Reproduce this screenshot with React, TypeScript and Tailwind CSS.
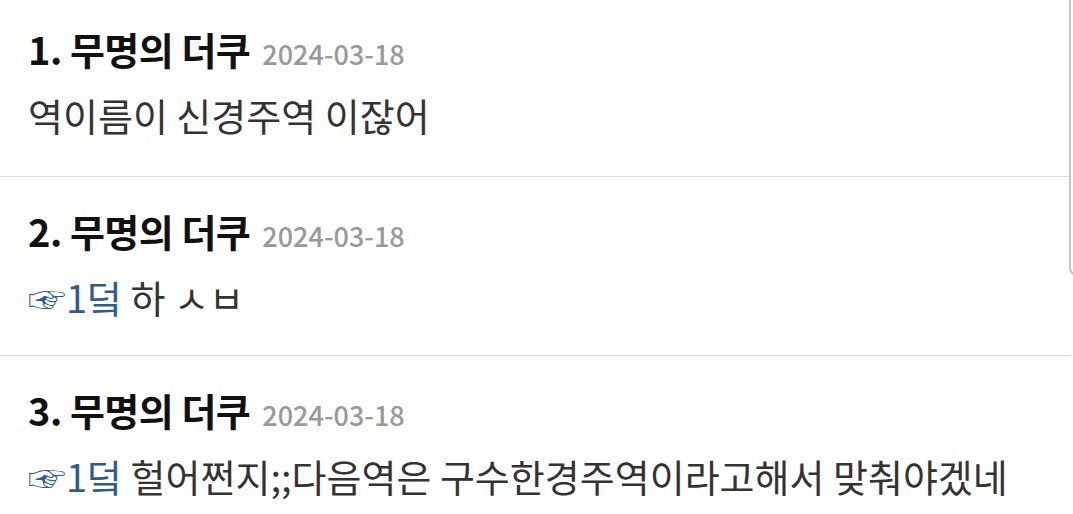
import React from 'react';

interface Comment {
  no: number;
  author: string;
  date: string;
  reply?: string;
  text: string;
}

const COMMENTS: Comment[] = [
  { no: 1, author: '무명의 더쿠', date: '2024-03-18', text: '역이름이 신경주역 이잖어' },
  { no: 2, author: '무명의 더쿠', date: '2024-03-18', reply: '1덬', text: '하 ㅅㅂ' },
  { no: 3, author: '무명의 더쿠', date: '2024-03-18', reply: '1덬', text: '헐어쩐지;;다음역은 구수한경주역이라고해서 맞춰야겠네' },
];

export default function App() {
  return (
    <div
      className="relative w-[1073px] h-[514px] overflow-hidden bg-white"
      style={{ fontFamily: '"Noto Sans CJK KR", "Noto Sans", sans-serif' }}
    >
      <div className="-mt-[5px]">
        {COMMENTS.map((c, i) => (
          <div
            key={c.no}
            className={`border-b border-[#dcdcdc] pl-[28px] pt-[30px] mr-[2px] ${i === 0 ? 'pb-[37px]' : 'pb-[34px]'}`}
          >
            <div className="flex items-baseline h-[48px] leading-[48px] whitespace-nowrap">
              <span className="text-[38px] font-bold text-[#111] tracking-[-0.5px]">
                {c.no}. {c.author}
              </span>
              <span className="ml-[12px] text-[27px] font-medium text-[#999]">{c.date}</span>
            </div>
            <div className="mt-[18px] h-[48px] leading-[48px] text-[38px] text-[#333] whitespace-nowrap">
              {c.reply && (
                <span className="text-[#2e5d8b]">
                  <span>☞</span>
                  {c.reply}{' '}
                </span>
              )}
              {c.text}
            </div>
          </div>
        ))}
      </div>
      <div className="absolute top-0 right-[-6px] w-[10px] h-[276px] border-l-[2px] border-b-[2px] border-[#c4c4c4] rounded-bl-[8px]" />
    </div>
  );
}
